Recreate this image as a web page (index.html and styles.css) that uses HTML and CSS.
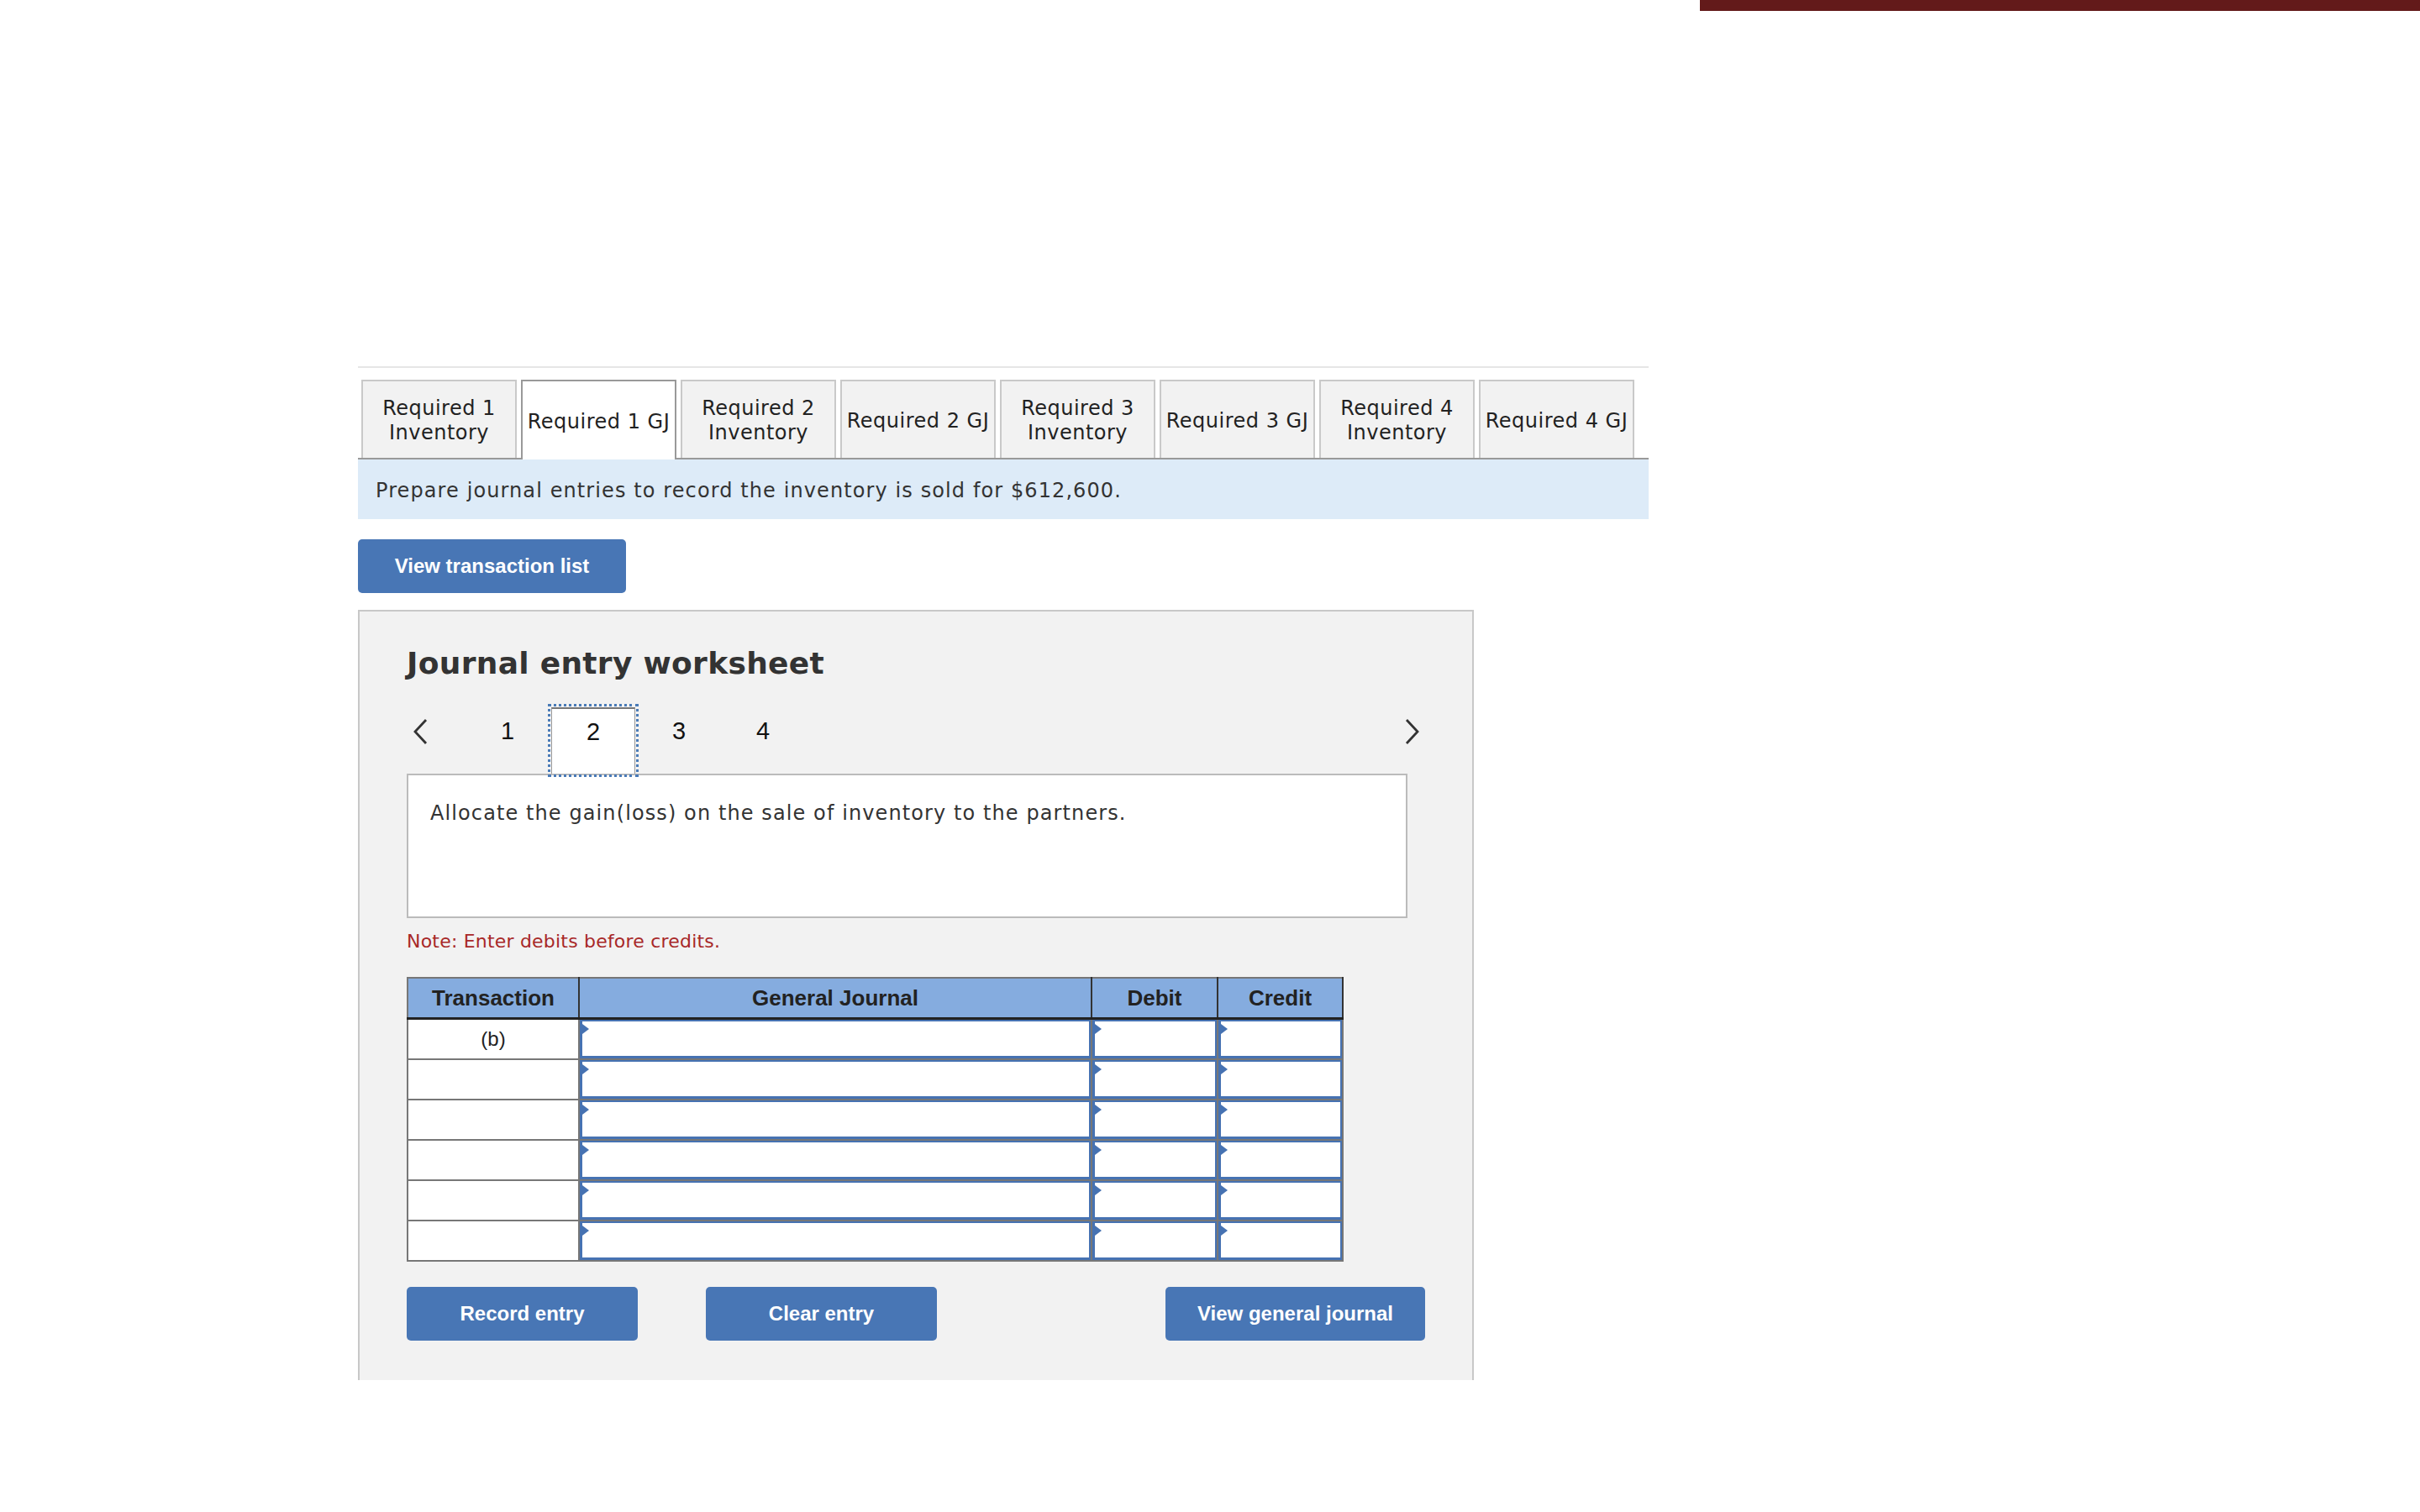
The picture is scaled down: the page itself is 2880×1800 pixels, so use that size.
FILE: index.html
```html
<!DOCTYPE html>
<html lang="en">
<head>
    <meta charset="UTF-8">
    <title>Journal entry worksheet</title>
    <link rel="stylesheet" href="styles.css">
</head>
<body>

    <div class="brand-strip">
        <div class="brand-bar"></div>
    </div>

    <div class="question">
        <div class="rule"></div>

        <div class="tabs">
            <div class="tab">Required 1<br>Inventory</div>
            <div class="tab active">Required 1 GJ</div>
            <div class="tab">Required 2<br>Inventory</div>
            <div class="tab">Required 2 GJ</div>
            <div class="tab">Required 3<br>Inventory</div>
            <div class="tab">Required 3 GJ</div>
            <div class="tab">Required 4<br>Inventory</div>
            <div class="tab">Required 4 GJ</div>
        </div>

        <div class="info">Prepare journal entries to record the inventory is sold for $612,600.</div>

        <button class="btn btn-list">View transaction list</button>

        <div class="worksheet">
            <h2>Journal entry worksheet</h2>

            <div class="steps">
                <span class="step-arrow">
                    <svg width="17" height="30" viewBox="0 0 17 30"><polyline points="15,1 2,15 15,29" fill="none" stroke="#333" stroke-width="2.8"/></svg>
                </span>
                <span class="step">1</span>
                <span class="step current">2</span>
                <span class="step">3</span>
                <span class="step">4</span>
                <span class="step-arrow next">
                    <svg width="17" height="30" viewBox="0 0 17 30"><polyline points="2,1 15,15 2,29" fill="none" stroke="#333" stroke-width="2.8"/></svg>
                </span>
            </div>

            <div class="description">Allocate the gain(loss) on the sale of inventory to the partners.</div>

            <p class="note">Note: Enter debits before credits.</p>

            <table class="journal">
                <colgroup>
                    <col style="width: 204px">
                    <col style="width: 610px">
                    <col style="width: 150px">
                    <col style="width: 149px">
                </colgroup>
                <thead>
                    <tr>
                        <th>Transaction</th>
                        <th>General Journal</th>
                        <th>Debit</th>
                        <th>Credit</th>
                    </tr>
                </thead>
                <tbody id="rows"></tbody>
            </table>

            <div class="actions">
                <button class="btn btn-record">Record entry</button>
                <button class="btn btn-clear">Clear entry</button>
                <button class="btn btn-journal">View general journal</button>
            </div>
        </div>
    </div>

    <script>
        const rows = document.getElementById('rows');
        const labels = ['(b)', '', '', '', '', ''];

        labels.forEach(label => {
            const tr = document.createElement('tr');
            tr.innerHTML = `<td class="trans">${label}</td>
                <td><div class="entry"></div></td>
                <td><div class="entry"></div></td>
                <td><div class="entry"></div></td>`;
            rows.appendChild(tr);
        });
    </script>

</body>
</html>
```

FILE: styles.css
```css
body {
    margin: 0;
    background-color: #fff;
    font-family: "DejaVu Sans", Verdana, sans-serif;
    color: #333;
}

.brand-strip {
    display: flex;
    justify-content: flex-end;
}

.brand-bar {
    width: 857px;
    height: 13px;
    background-color: #631a1a;
}

.question {
    width: 1536px;
    margin: 423px 0 0 426px;
}

.rule {
    border-top: 2px solid #e6e6e6;
}

/* tabs */
.tabs {
    display: flex;
    align-items: flex-start;
    gap: 5px;
    padding: 14px 0 0 4px;
    border-bottom: 2px solid #999;
}

.tab {
    width: 185px;
    height: 93px;
    box-sizing: border-box;
    padding-top: 3px;
    border: 2px solid #c9c9c9;
    border-bottom: none;
    background-color: #f2f2f2;
    display: flex;
    align-items: center;
    justify-content: center;
    text-align: center;
    font-size: 24px;
    line-height: 29px;
    letter-spacing: 0.5px;
    color: #222;
}

.tab.active {
    height: 95px;
    margin-bottom: -2px;
    background-color: #fff;
    border-color: #999;
}

.info {
    height: 71px;
    box-sizing: border-box;
    padding: 3px 0 0 21px;
    display: flex;
    align-items: center;
    background-color: #ddebf8;
    font-size: 24px;
    letter-spacing: 1.1px;
    color: #333;
}

.btn {
    height: 64px;
    border: none;
    border-radius: 5px;
    background-color: #4876b5;
    color: #fff;
    font-family: "Liberation Sans", Arial, sans-serif;
    font-weight: bold;
    font-size: 24px;
    cursor: pointer;
}

.btn-list {
    display: block;
    width: 319px;
    margin-top: 24px;
}

/* worksheet panel */
.worksheet {
    width: 1328px;
    box-sizing: border-box;
    margin-top: 20px;
    padding: 40px 0 47px 56px;
    border: 2px solid #c8c8c8;
    border-bottom: none;
    background-color: #f2f2f2;
}

.worksheet h2 {
    margin: 0;
    font-size: 36px;
    line-height: 44px;
    letter-spacing: 0.3px;
    color: #333;
}

.steps {
    display: flex;
    align-items: flex-start;
    width: 1215px;
    height: 79px;
    margin-top: 30px;
    font-family: "Liberation Sans", Arial, sans-serif;
    font-size: 29px;
    color: #111;
}

.step-arrow {
    display: flex;
    width: 62px;
    padding: 14px 0 0 8px;
}

.step-arrow.next {
    width: auto;
    margin-left: auto;
    padding: 14px 10px 0 0;
}

.step {
    width: 100px;
    height: 79px;
    box-sizing: border-box;
    padding-bottom: 22px;
    display: flex;
    align-items: center;
    justify-content: center;
}

.step.current {
    margin: 0 2px;
    background-color: #fff;
    border: 1px solid #999;
    border-top: 2px solid #777;
    border-bottom: none;
    outline: 3px dotted #4a7bb7;
    outline-offset: 1px;
}

.description {
    width: 1191px;
    height: 172px;
    box-sizing: border-box;
    padding: 31px 26px;
    border: 2px solid #bbb;
    background-color: #fff;
    font-size: 24px;
    line-height: 29px;
    letter-spacing: 1.1px;
    color: #333;
}

.note {
    margin: 14px 0 0;
    font-size: 22px;
    line-height: 27px;
    letter-spacing: 0.2px;
    color: #a82828;
}

/* journal table */
.journal {
    margin-top: 29px;
    width: 1113px;
    table-layout: fixed;
    border-collapse: collapse;
    font-family: "Liberation Sans", Arial, sans-serif;
    color: #222;
}

.journal th {
    height: 46px;
    padding: 0;
    background-color: #85acdf;
    border: 2px solid #333;
    border-top-color: #777;
    border-bottom: 3px solid #222;
    font-size: 26px;
    font-weight: bold;
}

.journal th:first-child {
    border-left-color: #777;
}

.journal td {
    padding: 0;
    border: 2px solid #777;
    background-color: #fff;
}

.journal td.trans {
    height: 46px;
    text-align: center;
    font-size: 24px;
}

.entry {
    position: relative;
    height: 46px;
    box-sizing: border-box;
    border: 3px solid #4672b2;
    border-top-width: 2px;
    border-right-width: 2px;
}

.entry::before {
    content: "";
    position: absolute;
    top: 3px;
    left: 0;
    border-left: 8px solid #4672b2;
    border-top: 6px solid transparent;
    border-bottom: 6px solid transparent;
}

.actions {
    display: flex;
    width: 1212px;
    margin-top: 30px;
}

.btn-record,
.btn-clear {
    width: 275px;
}

.btn-clear {
    margin-left: 81px;
}

.btn-journal {
    width: 309px;
    margin-left: auto;
}
```
